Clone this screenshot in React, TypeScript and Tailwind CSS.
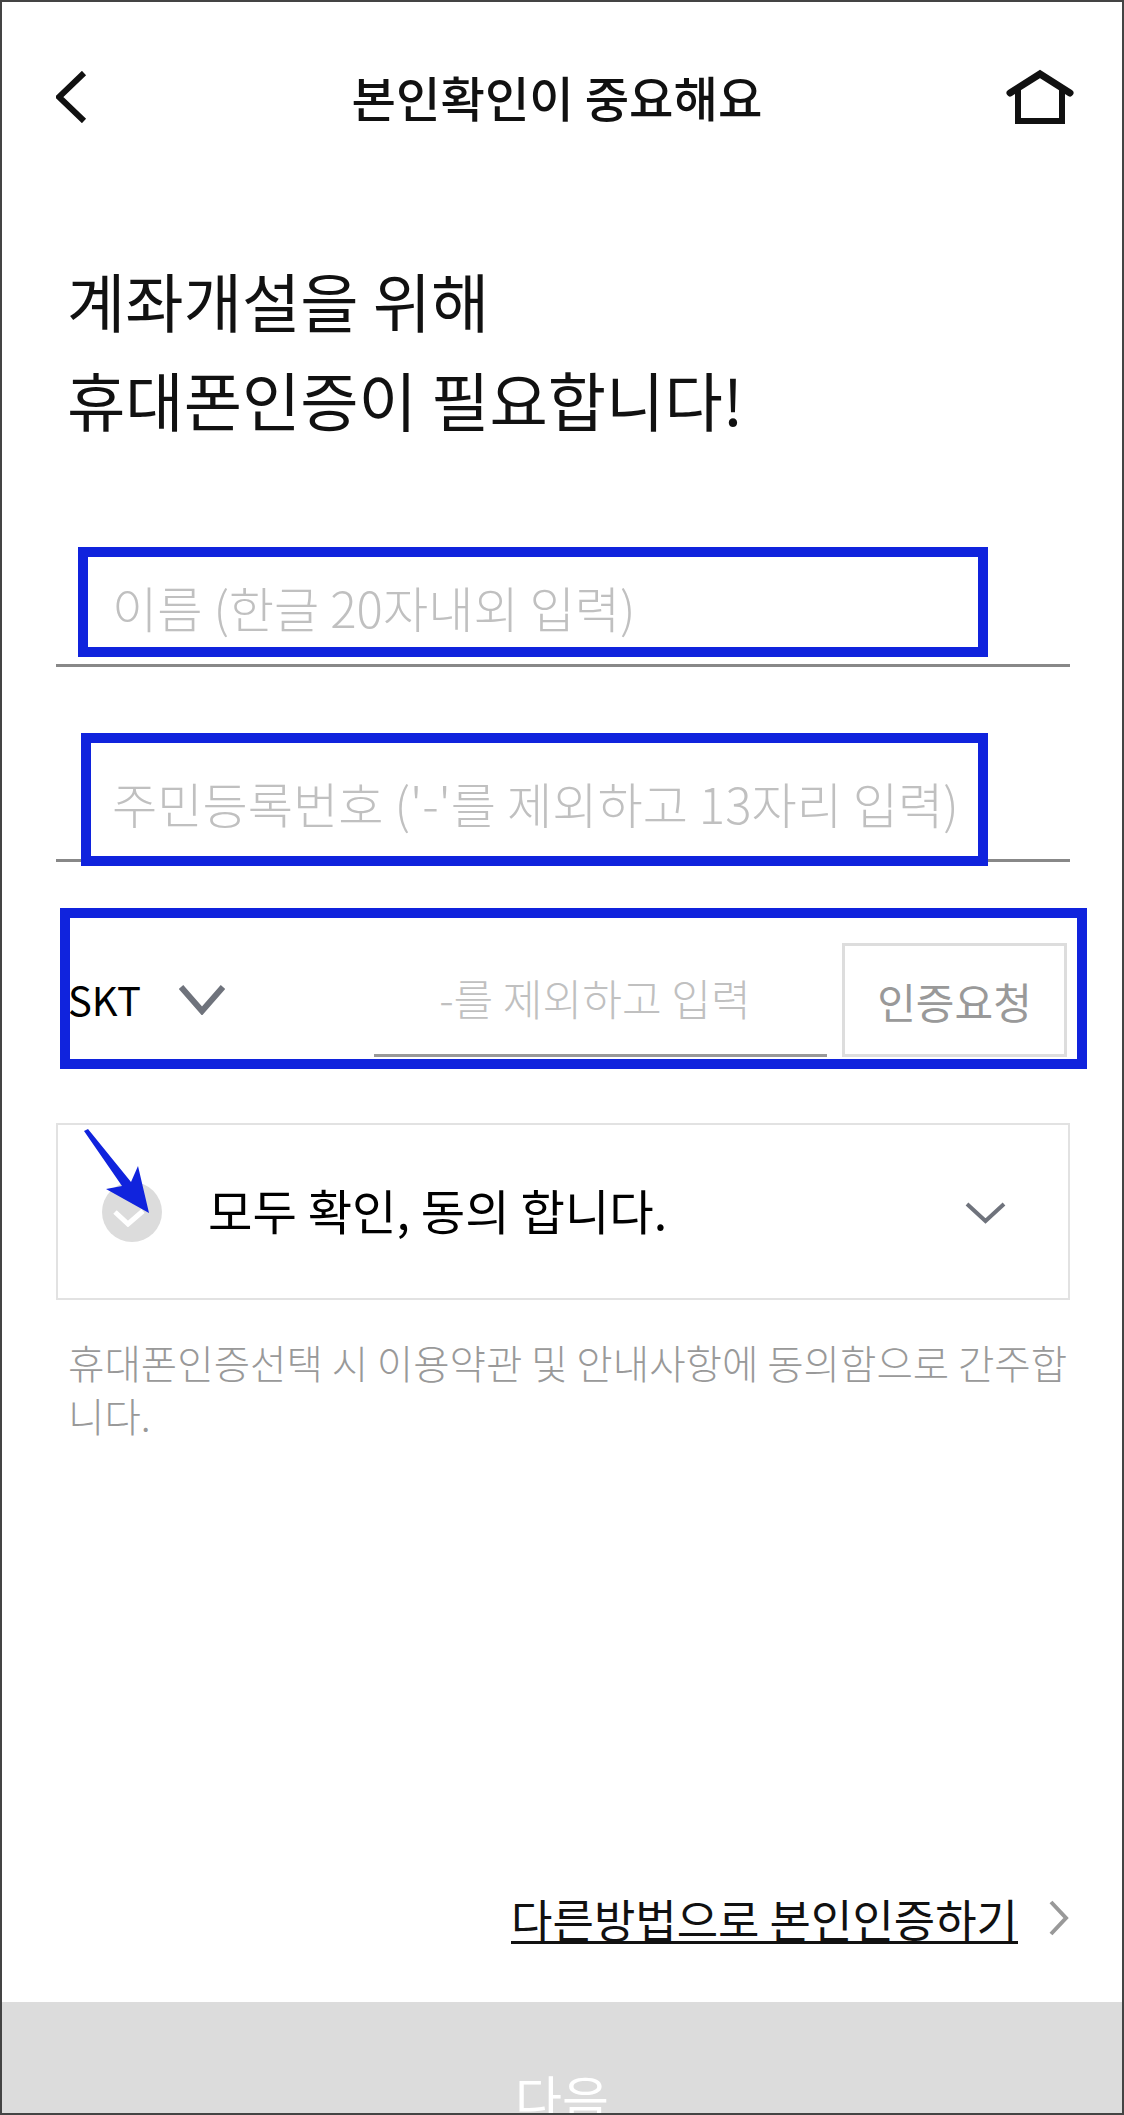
const font = "font-['Noto_Sans_CJK_KR','Noto_Sans',sans-serif]";

const App = () => {
  return (
    <div className={`relative w-[1124px] h-[2115px] bg-white border-2 border-[#444444] overflow-hidden flex flex-col ${font}`}>
      {/* Header */}
      <header className="h-[190px] shrink-0 flex items-center pl-[54px] pr-[48px] text-[#111111]">
        <svg width="32" height="52" viewBox="0 0 32 52" fill="none" className="shrink-0">
          <path d="M28 2 L3 26 L28 50" stroke="#111111" strokeWidth="6" />
        </svg>
        <h1 className="flex-1 pl-[20px] pb-[2px] text-center text-[48.3px] leading-[60px] font-medium">본인확인이 중요해요</h1>
        <svg width="68" height="56" viewBox="0 0 68 56" fill="none" className="shrink-0">
          <path d="M4 24 L34 5 L64 24" stroke="#111111" strokeWidth="7" strokeLinecap="round" />
          <path d="M12 19 V52 H56 V19" stroke="#111111" strokeWidth="6" />
        </svg>
      </header>

      {/* Title */}
      <div className="mt-[58px] ml-[65px] text-[63.4px] leading-[99px] text-[#111111]">
        <p>계좌개설을 위해</p>
        <p>휴대폰인증이 필요합니다!</p>
      </div>

      {/* Name */}
      <div className="mt-[107px] ml-[54px] w-[1014px] h-[112px] border-b-[3px] border-[#888888] pl-[56px] text-[49.2px] leading-[104px] font-light text-[#c0c0c0]">
        이름 (한글 20자내외 입력)
      </div>

      {/* Resident number */}
      <div className="mt-[84px] ml-[54px] w-[1014px] h-[111px] border-b-[3px] border-[#888888] pl-[56px] text-[49.2px] leading-[104px] font-light text-[#c0c0c0]">
        주민등록번호 ('-'를 제외하고 13자리 입력)
      </div>

      {/* Phone */}
      <div className="mt-[81px] ml-[66px] w-[999px] h-[114px] flex items-stretch">
        <div className="w-[306px] flex items-center text-[40px] pb-[3px] text-black">
          <span>SKT</span>
          <svg width="46" height="30" viewBox="0 0 46 30" fill="none" className="ml-[38px] mt-[3px]">
            <path d="M2 2 L23 26 L44 2" stroke="#6f737c" strokeWidth="6" />
          </svg>
        </div>
        <div className="w-[453px] border-b-[3px] border-[#999999] flex items-center justify-center pr-[11px] pb-[3px] text-[43.2px] font-light text-[#c0c0c0]">
          -를 제외하고 입력
        </div>
        <button className="ml-[15px] w-[225px] border-[3px] border-[#dddddd] text-[42px] text-[#999999]">인증요청</button>
      </div>

      {/* Agree */}
      <div className="mt-[66px] ml-[54px] w-[1014px] h-[177px] border-2 border-[#e2e2e2] flex items-center pl-[44px] pr-[62px]">
        <div className="w-[60px] h-[60px] rounded-full bg-[#dcdcdc] flex items-center justify-center shrink-0">
          <svg width="32" height="18" viewBox="0 0 32 18" fill="none" className="mt-[13px] mr-[6px]">
            <path d="M2 3 L15 15 L30 2" stroke="white" strokeWidth="5" />
          </svg>
        </div>
        <span className="ml-[46px] pb-[5px] flex-1 text-[48.3px] text-black">모두 확인, 동의 합니다.</span>
        <svg width="41" height="22" viewBox="0 0 41 22" fill="none" className="mt-[2px]">
          <path d="M2 2 L20.5 19 L39 2" stroke="#6f737c" strokeWidth="4" />
        </svg>
      </div>

      <p className="mt-[35px] ml-[66px] w-[1002px] text-[39.6px] leading-[53px] font-light text-[#999999] break-all">
        휴대폰인증선택 시 이용약관 및 안내사항에 동의함으로 간주합니다.
      </p>

      {/* Other method */}
      <div className="mt-auto mb-[58px] mr-[53px] flex items-center justify-end">
        <a className="border-b-[3px] border-[#111111] text-[45px] leading-[44px] text-[#111111]">다른방법으로 본인인증하기</a>
        <svg width="20" height="36" viewBox="0 0 20 36" fill="none" className="ml-[31px] mb-[6px]">
          <path d="M2 2 L17 18 L2 34" stroke="#999999" strokeWidth="4" />
        </svg>
      </div>

      {/* Next */}
      <div className="h-[111px] shrink-0 bg-[#dcdcdc] text-center pt-[65px] text-[51px] leading-[60px] text-white">다음</div>

      {/* Annotations drawn over the form */}
      <div className="absolute left-[76px] top-[545px] w-[910px] h-[110px] border-[10px] border-[#1023dd]" />
      <div className="absolute left-[79px] top-[731px] w-[907px] h-[133px] border-[10px] border-[#1023dd]" />
      <div className="absolute left-[58px] top-[906px] w-[1027px] h-[161px] border-[10px] border-[#1023dd]" />
      <svg className="absolute left-[76px] top-[1120px]" width="80" height="100" viewBox="0 0 80 100" fill="none">
        <path d="M6 9 L10 7 L53 60 L60 44 L71 91 L28 67 L44 64 Z" fill="#1023dd" />
      </svg>
    </div>
  );
};

export default App;
